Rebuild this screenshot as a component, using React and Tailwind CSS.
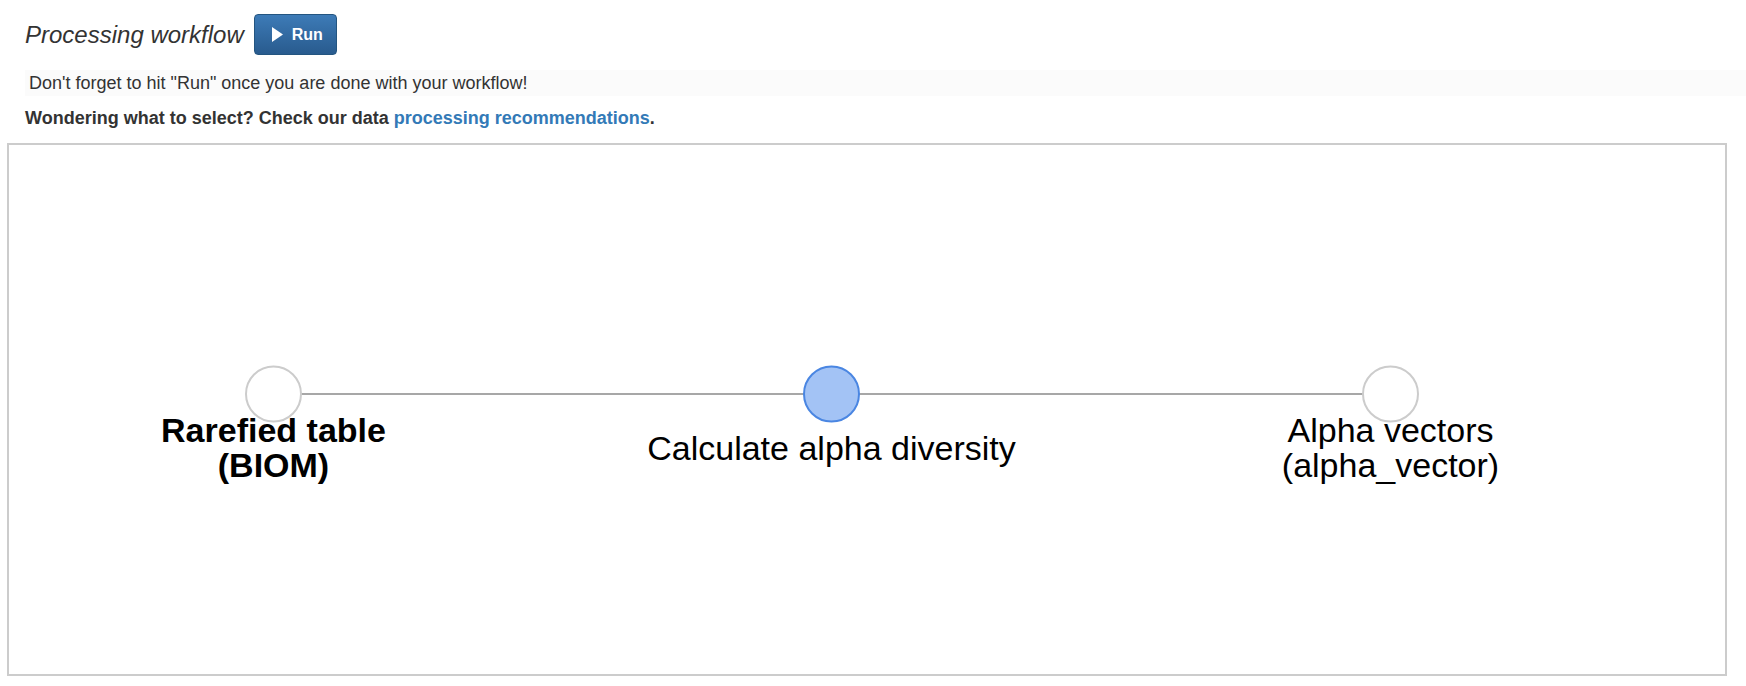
import React from "react";

const nodes = [
  { x: 264.5, label: ["Rarefied table", "(BIOM)"], bold: true, active: false },
  { x: 822.5, label: ["Calculate alpha diversity"], bold: false, active: true },
  { x: 1381.5, label: ["Alpha vectors", "(alpha_vector)"], bold: false, active: false },
];

function WorkflowGraph() {
  const cy = 249;
  return (
    <svg width="100%" height="529" className="block">
      <line x1={nodes[0].x} y1={cy} x2={nodes[2].x} y2={cy} stroke="#8a8a8a" strokeWidth="1.6" />
      {nodes.map((n) => (
        <g key={n.x}>
          <circle
            cx={n.x}
            cy={cy}
            r="27.5"
            fill={n.active ? "#a3c3f5" : "#ffffff"}
            stroke={n.active ? "#4a86e2" : "#cccccc"}
            strokeWidth="2"
          />
          {n.label.length === 1 ? (
            <text x={n.x} y="315" textAnchor="middle" fontSize="34" fill="#000">
              {n.label[0]}
            </text>
          ) : (
            <text x={n.x} textAnchor="middle" fontSize="34" fontWeight={n.bold ? "bold" : "normal"} fill="#000">
              <tspan x={n.x} y="297">{n.label[0]}</tspan>
              <tspan x={n.x} y="332">{n.label[1]}</tspan>
            </text>
          )}
        </g>
      ))}
    </svg>
  );
}

export default function App() {
  return (
    <main className="w-[1746px] h-[686px] bg-white pt-[14px] pl-[7px] pr-[19px] font-['Liberation_Sans',Arial,sans-serif] text-[#333]">
      {/* titulo + boton */}
      <div className="flex items-center pl-[18px] h-[41px]">
        <h3 className="italic text-[24px] leading-none">Processing workflow</h3>
        <button className="ml-[10px] w-[83px] h-[41px] flex items-center pl-[17px] gap-[9px] rounded-[4px] border border-[#245580] bg-linear-to-b from-[#3d7bb7] to-[#295b8e] text-white font-bold text-[16px]">
          <svg width="11" height="15" viewBox="0 0 11 15">
            <polygon points="0,0 11,7.5 0,15" fill="#fff" />
          </svg>
          Run
        </button>
      </div>
      <div className="mt-[15px] ml-[18px] mr-[-19px] h-[26px] flex items-center pl-[4px] bg-[#fbfbfb] text-[18px]">
        Don't forget to hit "Run" once you are done with your workflow!
      </div>
      <p className="ml-[18px] mt-[10px] h-[24px] leading-[24px] text-[18px] font-bold">
        Wondering what to select? Check our data{" "}
        <a href="#" className="text-[#337ab7]">processing recommendations</a>.
      </p>
      {/* grafo */}
      <div className="mt-[13px] h-[533px] border-2 border-[#cccccc]">
        <WorkflowGraph />
      </div>
    </main>
  );
}
